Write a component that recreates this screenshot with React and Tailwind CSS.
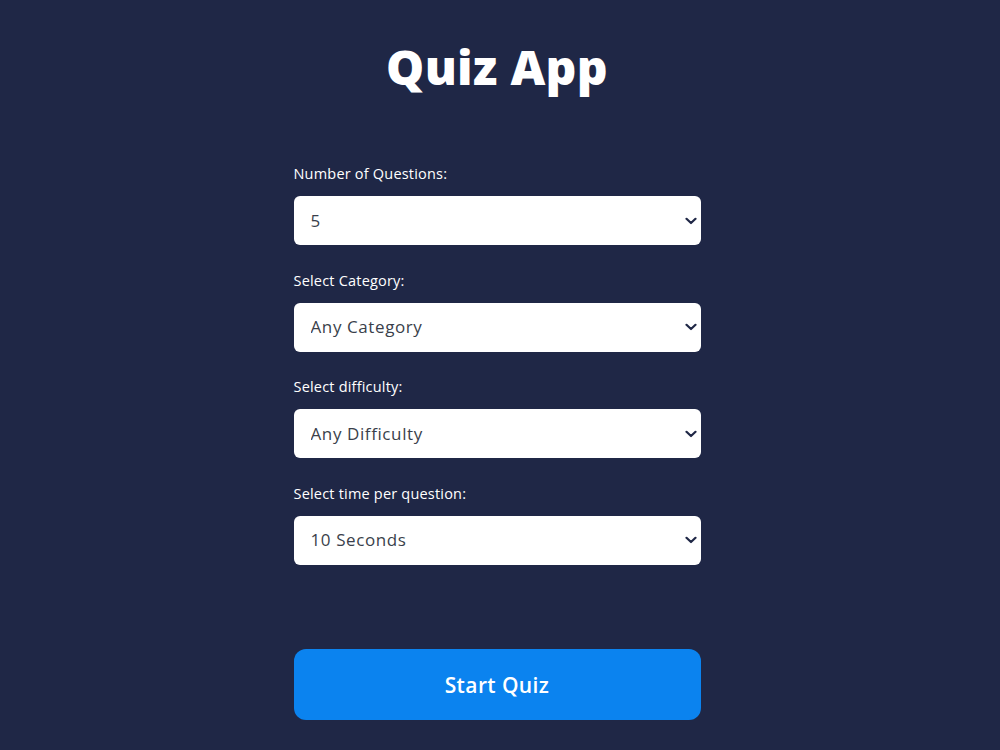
import React, { useState } from 'react';

const fields = [
  { label: 'Number of Questions:', options: ['5', '10', '15', '20'] },
  { label: 'Select Category:', options: ['Any Category', 'General Knowledge', 'Science', 'History'] },
  { label: 'Select difficulty:', options: ['Any Difficulty', 'Easy', 'Medium', 'Hard'] },
  { label: 'Select time per question:', options: ['10 Seconds', '15 Seconds', '20 Seconds', '30 Seconds'] },
];

const Chevron = () => (
  <svg
    className="pointer-events-none absolute right-[4px] top-1/2 -translate-y-1/2"
    width="12"
    height="8"
    viewBox="0 0 12 8"
    fill="none"
  >
    <path d="M1.5 1.8 6 6 10.5 1.8" stroke="#1f2746" strokeWidth="2.2" strokeLinecap="round" strokeLinejoin="round" />
  </svg>
);

const App = () => {
  const [values, setValues] = useState(fields.map((f) => f.options[0]));

  return (
    <div
      className="min-h-[750px] bg-[#1f2746] text-white flex flex-col items-center pt-[31px] pr-[6px]"
      style={{ fontFamily: '"Open Sans", "Liberation Sans", sans-serif' }}
    >
      <h1 className="text-[48px] leading-[72px] font-extrabold tracking-[0.3px]">Quiz App</h1>

      <div className="w-[407px] mt-[60px] flex flex-col">
        {fields.map((field, i) => (
          <div key={field.label} className={i > 0 ? 'mt-[24.5px]' : ''}>
            <label className="block text-[14.5px] leading-[21px] font-medium tracking-[0.2px] text-white">
              {field.label}
            </label>
            <div className="relative mt-[12px]">
              <select
                value={values[i]}
                onChange={(e) => {
                  const next = [...values];
                  next[i] = e.target.value;
                  setValues(next);
                }}
                className="appearance-none w-full h-[49px] rounded-md bg-white text-[#3a3f4b] text-[17px] tracking-[0.6px] pl-[17px] pr-8 outline-none"
              >
                {field.options.map((o) => (
                  <option key={o}>{o}</option>
                ))}
              </select>
              <Chevron />
            </div>
          </div>
        ))}

        <button className="mt-[84px] w-full h-[71px] rounded-xl bg-[#0b83ef] text-white text-[21px] font-semibold tracking-[0.4px] pt-[3px]">
          Start Quiz
        </button>
      </div>
    </div>
  );
};

export default App;
